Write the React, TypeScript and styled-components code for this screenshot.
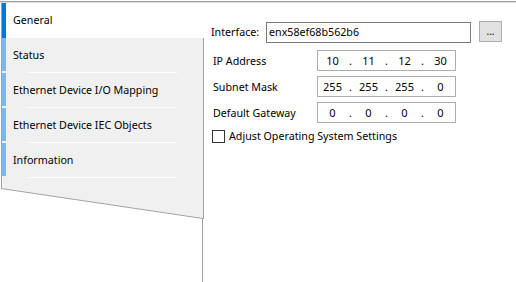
import React from "react";
import styled, { createGlobalStyle } from "styled-components";

const GlobalStyle = createGlobalStyle`
  html, body, #root {
    height: 100%;
  }
  body {
    margin: 0;
    background: #fff;
    font-family: "Noto Sans", "Open Sans", sans-serif;
    font-size: 10.7px;
    color: #000;
  }
`;

const Window = styled.div`
  height: 100%;
  box-sizing: border-box;
  padding-top: 1px;
  display: flex;
  flex-direction: column;
`;

const TopRule = styled.div`
  height: 1px;
  background: #a0a0a0;
  border-bottom: 1px solid #dcdcdc;
`;

const Body = styled.div`
  flex: 1;
  display: flex;
`;

const Sidebar = styled.div`
  width: 203px;
  margin-left: 1px;
  display: flex;
  flex-direction: column;
`;

const Tab = styled.div<{ $active?: boolean }>`
  position: relative;
  height: 35px;
  box-sizing: border-box;
  padding-left: 11px;
  padding-bottom: 1px;
  display: flex;
  align-items: center;
  background: ${(p) => (p.$active ? "#fff" : "#f0f0f0")};
  border-left: 1px solid #a0a0a0;
  border-right: 1px solid ${(p) => (p.$active ? "transparent" : "#a0a0a0")};

  &::before {
    content: "";
    position: absolute;
    left: 0;
    top: 0;
    bottom: ${(p) => (p.$active ? "0" : "2px")};
    width: 4px;
    background: ${(p) => (p.$active ? "#0078d7" : "#7ab8ef")};
  }

  &::after {
    content: "";
    display: ${(p) => (p.$active ? "none" : "block")};
    position: absolute;
    left: 26px;
    bottom: 0;
    width: 149px;
    height: 1px;
    background: #fff;
  }
`;

const Filler = styled.div`
  height: 10px;
  background: #f0f0f0;
  border-left: 1px solid #a0a0a0;
  border-right: 1px solid #a0a0a0;
`;

const Slant = styled.svg`
  display: block;
`;

const Tail = styled.div`
  flex: 1;
  border-right: 1px solid #a0a0a0;
  margin-right: 1px;
`;

const Content = styled.div`
  flex: 1;
  padding: 18px 0 0 7px;
  display: flex;
  flex-direction: column;
`;

const InterfaceRow = styled.div`
  display: flex;
  align-items: flex-start;
`;

const InterfaceLabel = styled.div`
  width: 55px;
  height: 21px;
  margin-top: 1px;
  line-height: 21px;
`;

const TextBox = styled.div`
  width: 205px;
  height: 21px;
  margin-top: 1px;
  box-sizing: border-box;
  border: 1px solid #7a7a7a;
  padding-left: 2px;
  line-height: 19px;
`;

const BrowseButton = styled.div`
  width: 23px;
  height: 21px;
  margin-left: 8px;
  box-sizing: border-box;
  border: 1px solid #adadad;
  background: #e1e1e1;
  display: flex;
  align-items: center;
  justify-content: center;
  font-size: 10px;
  line-height: 1;
  padding-bottom: 2px;
`;

const AddressList = styled.div`
  margin: 7px 0 0 2px;
  display: flex;
  flex-direction: column;
  gap: 5px;
`;

const AddressRow = styled.div`
  display: flex;
  align-items: center;
`;

const AddressLabel = styled.div`
  width: 104px;
`;

const IpBox = styled.div`
  width: 139px;
  height: 21px;
  box-sizing: border-box;
  border: 1px solid #adadad;
  display: grid;
  grid-template-columns: 29px 7px 29px 7px 29px 7px 29px;
  align-items: center;
  line-height: 19px;
  font-size: 11px;
`;

const Octet = styled.span`
  text-align: center;
`;

const Dot = styled.span`
  text-align: center;
`;

const CheckRow = styled.label`
  margin: 6px 0 0 1px;
  display: flex;
  align-items: center;
  gap: 4px;
`;

const CheckBox = styled.span`
  width: 13px;
  height: 13px;
  box-sizing: border-box;
  border: 1px solid #333;
  background: #fff;
`;

const tabs = [
  "General",
  "Status",
  "Ethernet Device I/O Mapping",
  "Ethernet Device IEC Objects",
  "Information",
];

const addresses = [
  { label: "IP Address", value: ["10", "11", "12", "30"] },
  { label: "Subnet Mask", value: ["255", "255", "255", "0"] },
  { label: "Default Gateway", value: ["0", "0", "0", "0"] },
];

export default function App() {
  return (
    <>
      <GlobalStyle />
      <Window>
        <TopRule />
        <Body>
          <Sidebar>
            {tabs.map((t, i) => (
              <Tab key={t} $active={i === 0}>
                {t}
              </Tab>
            ))}
            <Filler />
            <Slant width="203" height="31" viewBox="0 0 203 31">
              <polygon points="0,0 202,0 202,30" fill="#f0f0f0" />
              <line x1="0" y1="0.5" x2="202" y2="30.5" stroke="#a0a0a0" strokeWidth="1" />
              <line x1="202.5" y1="0" x2="202.5" y2="31" stroke="#a0a0a0" strokeWidth="1" />
            </Slant>
            <Tail />
          </Sidebar>
          <Content>
            <InterfaceRow>
              <InterfaceLabel>Interface:</InterfaceLabel>
              <TextBox>enx58ef68b562b6</TextBox>
              <BrowseButton>...</BrowseButton>
            </InterfaceRow>
            <AddressList>
              {addresses.map((a) => (
                <AddressRow key={a.label}>
                  <AddressLabel>{a.label}</AddressLabel>
                  <IpBox>
                    {a.value.map((v, i) => (
                      <React.Fragment key={i}>
                        {i > 0 && <Dot>.</Dot>}
                        <Octet>{v}</Octet>
                      </React.Fragment>
                    ))}
                  </IpBox>
                </AddressRow>
              ))}
            </AddressList>
            <CheckRow>
              <CheckBox />
              Adjust Operating System Settings
            </CheckRow>
          </Content>
        </Body>
      </Window>
    </>
  );
}
